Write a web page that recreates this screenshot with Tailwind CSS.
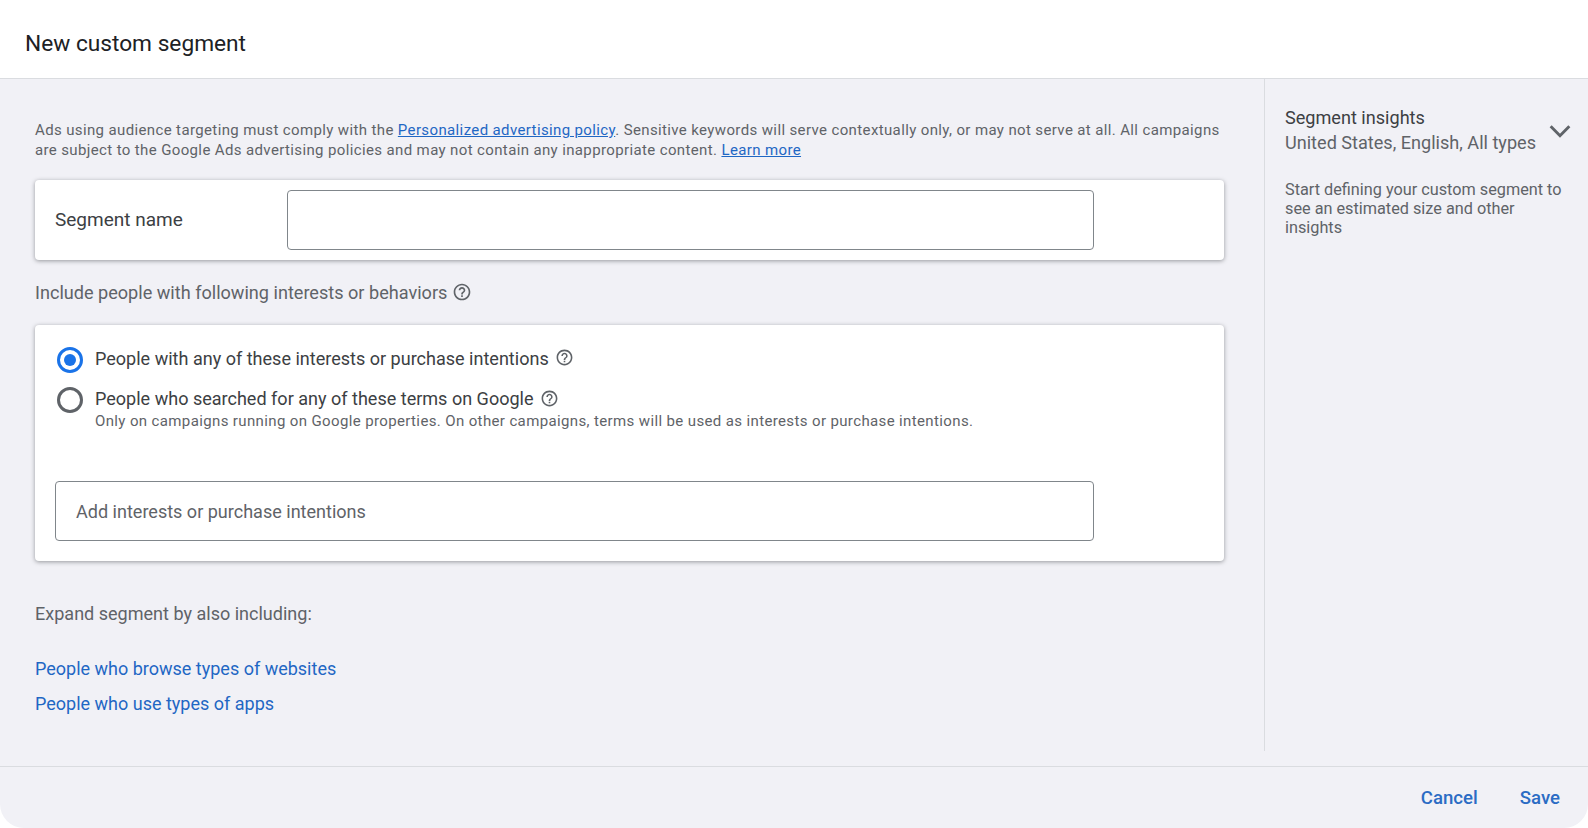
<!DOCTYPE html>
<html lang="en">
<head>
    <meta charset="UTF-8">
    <title>New custom segment</title>
    <script src="https://cdn.jsdelivr.net/npm/@tailwindcss/browser@4"></script>
</head>
<body class="bg-white h-[828px] w-[1588px] overflow-hidden font-['Roboto',sans-serif] text-[#3c4043]">
    <div class="h-[828px] flex flex-col bg-[#f1f1f6] rounded-b-[24px] overflow-hidden">
        <!-- Header -->
        <header class="h-[79px] shrink-0 bg-white border-b border-[#dadce0] flex items-center pl-[25px] pt-[10px] text-[22.7px] text-[#202124]">New custom segment</header>

        <div class="flex h-[672px] shrink-0">
            <!-- Main column -->
            <main class="w-[1264px] shrink-0 pl-[35px] pr-[40px] pt-[41px]">
                <p class="text-[15px] leading-[20px] tracking-[0.37px] text-[#5f6368]">Ads using audience targeting must comply with the <a href="#" class="text-[#1f67c4] underline">Personalized advertising policy</a>. Sensitive keywords will serve contextually only, or may not serve at all. All campaigns are subject to the Google Ads advertising policies and may not contain any inappropriate content. <a href="#" class="text-[#1f67c4] underline">Learn more</a></p>

                <section class="mt-[20px] h-[80px] bg-white rounded shadow-[0_1px_4px_rgba(60,64,67,0.5)] flex items-center pl-5">
                    <label class="w-[232px] text-[19px]">Segment name</label>
                    <input class="w-[807px] h-[60px] border border-[#80868b] rounded bg-white">
                </section>

                <div class="mt-[22px] flex items-center gap-[5px] text-[18.1px] text-[#5f6368] h-[22px]">
                    Include people with following interests or behaviors
                    <svg class="w-5 h-5 -mt-[3px]" viewBox="0 0 24 24" fill="#5f6368"><path d="M11 18h2v-2h-2v2zm1-16C6.48 2 2 6.48 2 12s4.48 10 10 10 10-4.48 10-10S17.52 2 12 2zm0 18c-4.41 0-8-3.59-8-8s3.59-8 8-8 8 3.59 8 8-3.59 8-8 8zm0-14c-2.21 0-4 1.79-4 4h2c0-1.1.9-2 2-2s2 .9 2 2c0 2-3 1.75-3 5h2c0-2.25 3-2.5 3-5 0-2.21-1.79-4-4-4z"/></svg>
                </div>

                <section class="mt-[21px] h-[236px] bg-white rounded shadow-[0_1px_4px_rgba(60,64,67,0.5)] pl-5 pt-[22px]">
                    <div class="flex items-center gap-[12px] pl-[2px] h-[24px]">
                        <span class="w-[26px] h-[26px] mt-[1px] rounded-full border-[3px] border-[#1a73e8] flex items-center justify-center"><span class="w-3 h-3 rounded-full bg-[#1a73e8]"></span></span>
                        <span class="text-[18.05px]">People with any of these interests or purchase intentions</span>
                        <svg class="w-[19px] h-[19px] -ml-[6px] -mt-[3px]" viewBox="0 0 24 24" fill="#5f6368"><path d="M11 18h2v-2h-2v2zm1-16C6.48 2 2 6.48 2 12s4.48 10 10 10 10-4.48 10-10S17.52 2 12 2zm0 18c-4.41 0-8-3.59-8-8s3.59-8 8-8 8 3.59 8 8-3.59 8-8 8zm0-14c-2.21 0-4 1.79-4 4h2c0-1.1.9-2 2-2s2 .9 2 2c0 2-3 1.75-3 5h2c0-2.25 3-2.5 3-5 0-2.21-1.79-4-4-4z"/></svg>
                    </div>
                    <div class="flex items-center gap-[12px] pl-[2px] h-[24px] mt-4">
                        <span class="w-[26px] h-[26px] mt-[1px] rounded-full border-[3px] border-[#5f6368]"></span>
                        <span class="text-[18.05px]">People who searched for any of these terms on Google</span>
                        <svg class="w-[19px] h-[19px] -ml-[6px] -mt-[2px]" viewBox="0 0 24 24" fill="#5f6368"><path d="M11 18h2v-2h-2v2zm1-16C6.48 2 2 6.48 2 12s4.48 10 10 10 10-4.48 10-10S17.52 2 12 2zm0 18c-4.41 0-8-3.59-8-8s3.59-8 8-8 8 3.59 8 8-3.59 8-8 8zm0-14c-2.21 0-4 1.79-4 4h2c0-1.1.9-2 2-2s2 .9 2 2c0 2-3 1.75-3 5h2c0-2.25 3-2.5 3-5 0-2.21-1.79-4-4-4z"/></svg>
                    </div>
                    <p class="text-[15px] leading-[20px] tracking-[0.37px] text-[#5f6368] pl-[40px]">Only on campaigns running on Google properties. On other campaigns, terms will be used as interests or purchase intentions.</p>
                    <div class="mt-[50px] w-[1039px] h-[60px] border border-[#80868b] rounded flex items-center pl-5 pt-[2px] text-[18.05px] text-[#5f6368]">Add interests or purchase intentions</div>
                </section>

                <p class="mt-[42px] text-[18.05px] text-[#5f6368] leading-[22px]">Expand segment by also including:</p>
                <a href="#" class="block mt-[33px] text-lg text-[#1f67c4] leading-[22px]">People who browse types of websites</a>
                <a href="#" class="block mt-[13px] text-lg text-[#1f67c4] leading-[22px]">People who use types of apps</a>
            </main>

            <!-- Insights -->
            <aside class="flex-1 border-l border-[#dadce0] pl-5 pr-4 pt-[26px]">
                <div class="flex items-center justify-between">
                    <div class="text-[18.1px] leading-[25px]">
                        <div>Segment insights</div>
                        <div class="text-[#5f6368]">United States, English, All types</div>
                    </div>
                    <svg class="w-7 h-7 -mr-[2px] mt-[1px]" viewBox="0 0 24 24" fill="none" stroke="#5f6368" stroke-width="2.5"><path d="M4 8l8 8 8-8"/></svg>
                </div>
                <p class="mt-[25px] pr-1 text-[16.25px] leading-[19px] text-[#5f6368]">Start defining your custom segment to see an estimated size and other insights</p>
            </aside>
        </div>

        <!-- Footer -->
        <footer class="mt-[15px] flex-1 border-t border-[#dadce0] flex items-center justify-end gap-[42px] pr-[28px] pt-[3px] text-[18.6px] font-medium text-[#2b6cc4]">
            <button>Cancel</button>
            <button>Save</button>
        </footer>
    </div>
</body>
</html>
